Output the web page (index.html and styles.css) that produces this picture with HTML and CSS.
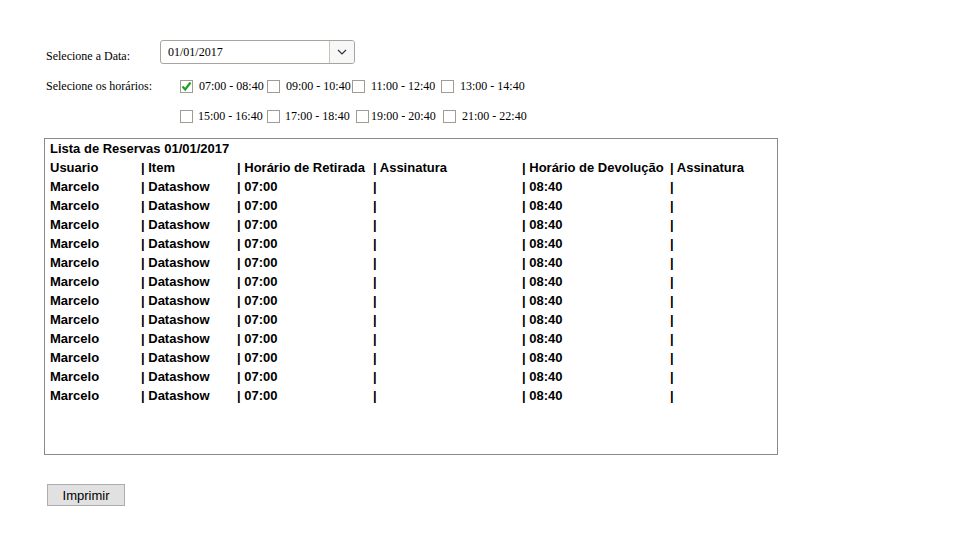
FILE: index.html
```html
<!DOCTYPE html>
<html lang="pt-BR">
<head>
<meta charset="utf-8">
<title>Reservas</title>
<link rel="stylesheet" href="styles.css">
</head>
<body>
<div class="page">
  <div class="row-date">
    <span class="lbl">Selecione a Data:</span>
    <div class="select">
      <span class="select-value">01/01/2017</span>
      <span class="select-btn">
        <svg width="10" height="6" viewBox="0 0 10 6"><path d="M1 1 L5 5 L9 1" fill="none" stroke="#333" stroke-width="1.2"/></svg>
      </span>
    </div>
  </div>
  <div class="row-hours">
    <span class="lbl">Selecione os horários:</span>
    <div class="hours">
      <div class="hline">
        <span class="cb checked"><svg width="11" height="11" viewBox="0 0 11 11"><path d="M1.5 5.5 L4.2 8.5 L9.5 1.5" fill="none" stroke="#21a121" stroke-width="2.2"/></svg></span><span class="ht w1">07:00 - 08:40</span>
        <span class="cb"></span><span class="ht w2">09:00 - 10:40</span>
        <span class="cb"></span><span class="ht w3">11:00 - 12:40</span>
        <span class="cb c4"></span><span class="ht">13:00 - 14:40</span>
      </div>
      <div class="hline">
        <span class="cb"></span><span class="ht w1b">15:00 - 16:40</span>
        <span class="cb"></span><span class="ht w2b">17:00 - 18:40</span>
        <span class="cb c3b"></span><span class="ht w3b">19:00 - 20:40</span>
        <span class="cb c4b"></span><span class="ht">21:00 - 22:40</span>
      </div>
    </div>
  </div>
  <div class="list">
    <div class="title">Lista de Reservas 01/01/2017</div>
    <div class="grid">
      <span>Usuario</span><span>| Item</span><span>| Horário de Retirada</span><span>| Assinatura</span><span>| Horário de Devolução</span><span>| Assinatura</span>
      <span>Marcelo</span><span>| Datashow</span><span>| 07:00</span><span>|</span><span>| 08:40</span><span>|</span>
      <span>Marcelo</span><span>| Datashow</span><span>| 07:00</span><span>|</span><span>| 08:40</span><span>|</span>
      <span>Marcelo</span><span>| Datashow</span><span>| 07:00</span><span>|</span><span>| 08:40</span><span>|</span>
      <span>Marcelo</span><span>| Datashow</span><span>| 07:00</span><span>|</span><span>| 08:40</span><span>|</span>
      <span>Marcelo</span><span>| Datashow</span><span>| 07:00</span><span>|</span><span>| 08:40</span><span>|</span>
      <span>Marcelo</span><span>| Datashow</span><span>| 07:00</span><span>|</span><span>| 08:40</span><span>|</span>
      <span>Marcelo</span><span>| Datashow</span><span>| 07:00</span><span>|</span><span>| 08:40</span><span>|</span>
      <span>Marcelo</span><span>| Datashow</span><span>| 07:00</span><span>|</span><span>| 08:40</span><span>|</span>
      <span>Marcelo</span><span>| Datashow</span><span>| 07:00</span><span>|</span><span>| 08:40</span><span>|</span>
      <span>Marcelo</span><span>| Datashow</span><span>| 07:00</span><span>|</span><span>| 08:40</span><span>|</span>
      <span>Marcelo</span><span>| Datashow</span><span>| 07:00</span><span>|</span><span>| 08:40</span><span>|</span>
      <span>Marcelo</span><span>| Datashow</span><span>| 07:00</span><span>|</span><span>| 08:40</span><span>|</span>
    </div>
  </div>
  <button class="btn">Imprimir</button>
</div>
</body>
</html>
```
FILE: styles.css
```css
html, body {
  margin: 0;
  padding: 0;
  background: #fff;
}
.page {
  padding: 40px 0 0 0;
  font-family: "Liberation Serif", "Times New Roman", serif;
  font-size: 12px;
  color: #000;
}
.row-date {
  display: flex;
  align-items: center;
  height: 24px;
  padding-left: 46px;
}
.row-date .lbl {
  width: 114px;
  padding-top: 8px;
}
.select {
  box-sizing: border-box;
  width: 195px;
  height: 24px;
  border: 1px solid #a9a49b;
  border-radius: 3px;
  display: flex;
  align-items: stretch;
  background: #fff;
}
.select-value {
  flex: 1;
  padding: 4px 0 0 7px;
  line-height: 14px;
}
.select-btn {
  width: 24px;
  border-left: 1px solid #c8c4bd;
  display: flex;
  align-items: center;
  justify-content: center;
  background: #f7f7f7;
  border-radius: 0 2px 2px 0;
}
.row-hours {
  display: flex;
  padding-left: 46px;
  margin-top: 7px;
}
.row-hours .lbl {
  width: 134px;
  line-height: 30px;
}
.hours {
  display: flex;
  flex-direction: column;
}
.hline {
  display: flex;
  align-items: center;
  height: 30px;
}
.cb {
  box-sizing: border-box;
  width: 13px;
  height: 13px;
  border: 1px solid #a19c93;
  background: #fff;
  display: inline-flex;
  align-items: center;
  justify-content: center;
}
.cb.checked svg {
  display: block;
}
.ht {
  margin-left: 6px;
  white-space: nowrap;
}
.w1 { width: 68px; }
.w2 { width: 66px; }
.w3 { width: 70px; }
.c4 { margin-left: 0; }
.w1b { margin-left: 5px; width: 69px; }
.w2b { margin-left: 5px; width: 71px; }
.w3b { margin-left: 2px; width: 72px; }
.list {
  box-sizing: border-box;
  margin: 7px 0 0 44px;
  width: 734px;
  height: 317px;
  border: 1px solid #8a8a8e;
  padding: 0 0 0 5px;
  font-family: "Liberation Sans", Arial, sans-serif;
  font-weight: bold;
  font-size: 13px;
  line-height: 19px;
  color: #000;
}
.grid {
  display: grid;
  grid-template-columns: 91px 96px 136px 149px 148px 1fr;
  white-space: nowrap;
}
.btn {
  display: block;
  margin: 29px 0 0 47px;
  box-sizing: border-box;
  width: 78px;
  height: 22px;
  background: #e1e1e1;
  border: 1px solid #adadad;
  border-radius: 0;
  font-family: "Liberation Sans", Arial, sans-serif;
  font-size: 13px;
  color: #000;
  padding: 0;
}
```
